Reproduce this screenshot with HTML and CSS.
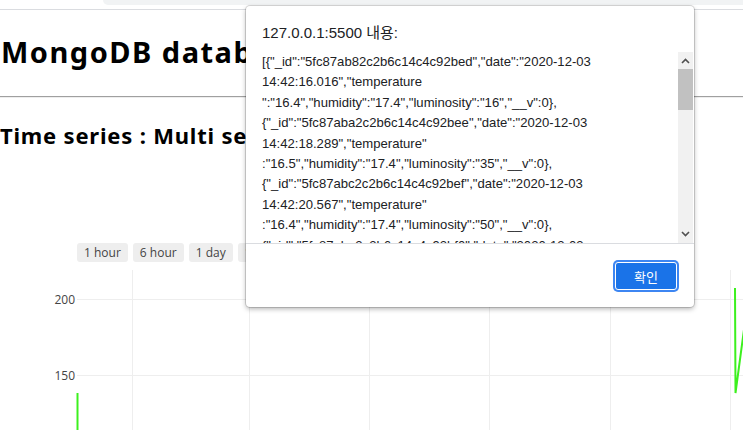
FILE: index.html
```html
<!DOCTYPE html>
<html lang="ko">
<head>
<meta charset="utf-8">
<title>MongoDB database</title>
<link rel="stylesheet" href="styles.css">
</head>
<body>
<div class="chrome"><div class="chrome-band"></div></div>
<main class="page">
  <h1 class="title">MongoDB database</h1>
  <hr class="rule">
  <h2 class="subtitle">Time series : Multi series</h2>
  <section class="plot">
    <div class="ranges">
      <span class="range">1 hour</span>
      <span class="range">6 hour</span>
      <span class="range">1 day</span>
      <span class="range">1 week</span>
      <span class="range">all</span>
    </div>
    <svg class="chart" width="743" height="168" viewBox="0 0 743 168">
      <g class="grid">
        <line x1="132.5" y1="8" x2="132.5" y2="168"/>
        <line x1="249.5" y1="8" x2="249.5" y2="168"/>
        <line x1="369.5" y1="8" x2="369.5" y2="168"/>
        <line x1="489.5" y1="8" x2="489.5" y2="168"/>
        <line x1="610.5" y1="8" x2="610.5" y2="168"/>
        <line x1="730.5" y1="8" x2="730.5" y2="168"/>
        <line x1="77" y1="37.5" x2="743" y2="37.5"/>
        <line x1="77" y1="113.5" x2="743" y2="113.5"/>
      </g>
      <g class="ticks">
        <text x="75" y="41.5" text-anchor="end">200</text>
        <text x="75" y="117.5" text-anchor="end">150</text>
      </g>
      <polyline class="trace" points="77.5,131 77.5,170"/>
      <polyline class="trace" points="735,26 735.5,131 745,60"/>
    </svg>
  </section>
</main>

<div class="dialog" role="alertdialog">
  <div class="dialog-title">127.0.0.1:5500 내용:</div>
  <div class="dialog-body">
    <div class="dialog-text">
      <div class="ln">[{"_id":"5fc87ab82c2b6c14c4c92bed","date":"2020-12-03</div>
      <div class="ln">14:42:16.016","temperature</div>
      <div class="ln">":"16.4","humidity":"17.4","luminosity":"16","__v":0},</div>
      <div class="ln">{"_id":"5fc87aba2c2b6c14c4c92bee","date":"2020-12-03</div>
      <div class="ln">14:42:18.289","temperature"</div>
      <div class="ln">:"16.5","humidity":"17.4","luminosity":"35","__v":0},</div>
      <div class="ln">{"_id":"5fc87abc2c2b6c14c4c92bef","date":"2020-12-03</div>
      <div class="ln">14:42:20.567","temperature"</div>
      <div class="ln">:"16.4","humidity":"17.4","luminosity":"50","__v":0},</div>
      <div class="ln">{"_id":"5fc87abe2c2b6c14c4c92bf0","date":"2020-12-03</div>
    </div>
    <div class="scrollbar">
      <svg class="arrow" width="15" height="17" viewBox="0 0 15 17"><path d="M4 11 L7.5 7.5 L11 11" fill="none" stroke="#505050" stroke-width="1.6"/></svg>
      <div class="thumb"></div>
      <div class="track-fill"></div>
      <svg class="arrow" width="15" height="17" viewBox="0 0 15 17"><path d="M4 6 L7.5 9.5 L11 6" fill="none" stroke="#505050" stroke-width="1.6"/></svg>
    </div>
  </div>
  <div class="dialog-footer">
    <button class="ok">확인</button>
  </div>
</div>
</body>
</html>
```

FILE: styles.css
```css
html, body {
  margin: 0;
  padding: 0;
  background: #ffffff;
  width: 743px;
  height: 430px;
  overflow: hidden;
  font-family: "Noto Sans", "Noto Sans CJK KR", sans-serif;
  color: #000;
}

.chrome {
  height: 9px;
  border-bottom: 1px solid #dadce0;
}

.chrome-band {
  margin-left: 103px;
  height: 5px;
  background: #f1f3f4;
  border-bottom-left-radius: 8px;
}

.page {
  padding-left: 1px;
}

.title {
  margin: 23px 0 0 0;
  font-size: 29px;
  line-height: 38px;
  font-weight: 700;
  letter-spacing: 1.5px;
}

.rule {
  margin: 25px 0 0 -1px;
  border: 0;
  border-top: 1px solid #a0a0a0;
  border-bottom: 1px solid #eeeeee;
  height: 0;
}

.subtitle {
  margin: 22px 0 0 -1px;
  font-size: 22px;
  line-height: 30px;
  font-weight: 700;
  letter-spacing: 0.8px;
}

.plot {
  margin-top: 93px;
  margin-left: -1px;
}

.ranges {
  display: flex;
  gap: 5px;
  padding-left: 77px;
  height: 19px;
}

.range {
  display: flex;
  align-items: center;
  padding: 0 7px;
  background: #eeeeee;
  border-radius: 3px;
  font-family: "Open Sans", sans-serif;
  font-size: 12px;
  color: #444;
  white-space: nowrap;
}

.chart {
  display: block;
}

.grid line {
  stroke: #eeeeee;
  stroke-width: 1;
}

.ticks text {
  font-family: "Open Sans", sans-serif;
  font-size: 12px;
  fill: #444;
}

.trace {
  fill: none;
  stroke: #3cf01e;
  stroke-width: 2;
}

.dialog {
  position: absolute;
  left: 246px;
  top: 6px;
  width: 448px;
  height: 301px;
  background: #fff;
  border-radius: 4px;
  box-shadow: 0 0 0 1px rgba(0,0,0,0.14), 0 2px 5px rgba(0,0,0,0.3);
  display: flex;
  flex-direction: column;
  overflow: hidden;
}

.dialog-title {
  height: 46px;
  box-sizing: border-box;
  padding: 16px 0 0 16px;
  font-family: "Liberation Sans", "Noto Sans CJK KR", sans-serif;
  font-size: 15px;
  line-height: 22px;
  color: #202124;
}

.dialog-body {
  display: flex;
  height: 191px;
  border-bottom: 1px solid #dadce0;
}

.dialog-text {
  flex: 1;
  padding-left: 16px;
  overflow: hidden;
  font-family: "Liberation Sans", sans-serif;
  font-size: 13.1px;
  line-height: 20.4px;
  color: #202124;
}

.ln {
  white-space: nowrap;
}

.scrollbar {
  width: 15px;
  background: #f1f1f1;
  display: flex;
  flex-direction: column;
  margin-right: 1px;
}

.arrow {
  display: block;
  flex: none;
}

.thumb {
  height: 41px;
  background: #c1c1c1;
  flex: none;
}

.track-fill {
  flex: 1;
}

.dialog-footer {
  display: flex;
  justify-content: flex-end;
  padding: 18px 17px 0 0;
}

.ok {
  width: 62px;
  height: 28px;
  border: 1px solid #ffffff;
  border-radius: 3px;
  box-shadow: 0 0 0 2px #3d86f2;
  background: #1a73e8;
  color: #fff;
  font-family: "Noto Sans CJK KR", sans-serif;
  font-size: 13px;
  padding: 0;
}
```
